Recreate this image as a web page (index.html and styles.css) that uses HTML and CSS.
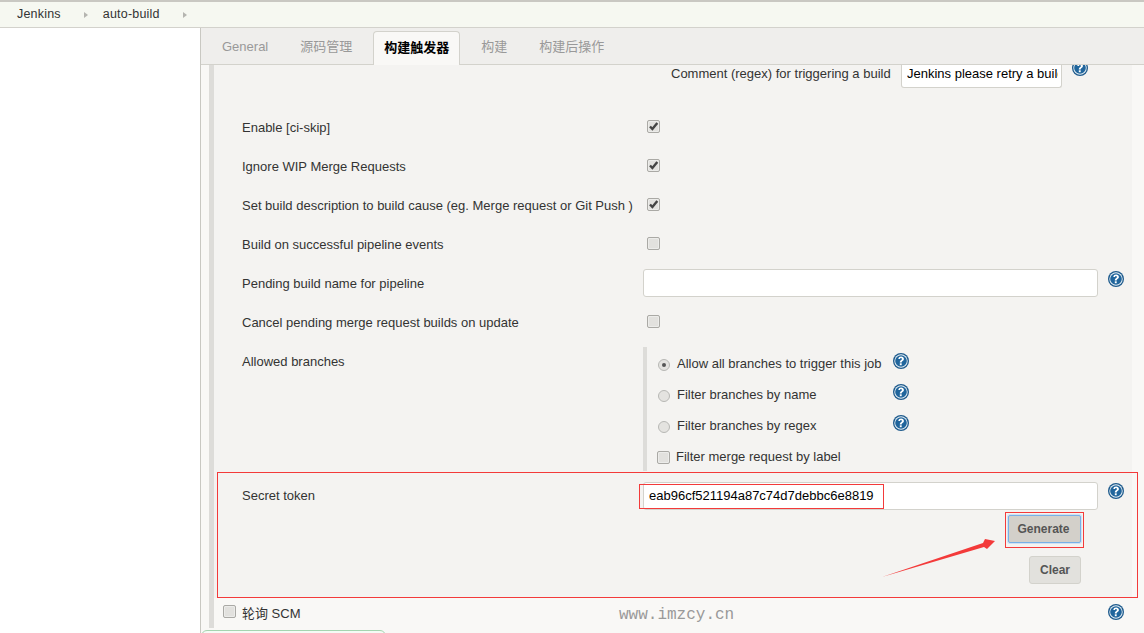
FILE: index.html
```html
<!DOCTYPE html>
<html lang="zh">
<head>
<meta charset="utf-8">
<title>auto-build Config</title>
<link rel="stylesheet" href="styles.css">
</head>
<body>
<svg class="defs" width="0" height="0" aria-hidden="true">
  <symbol id="help" viewBox="0 0 16 16">
    <circle cx="8" cy="8" r="8" fill="#1d5a8c"/>
    <circle cx="8" cy="8" r="6.7" fill="#e9f0f5"/>
    <circle cx="8" cy="8" r="5.8" fill="#20659c"/>
    <path d="M5.300 6.100C5.400 4.300 6.600 3.500 8.100 3.500c1.700 0 2.800 1 2.800 2.400 0 1.100-.7 1.700-1.400 2.200-.6.400-.8.800-.8 1.400H6.800c0-1.100.3-1.700 1.100-2.300.6-.5 1-.8 1-1.300 0-.5-.4-.8-.9-.8-.6 0-1 .4-1.100 1z" fill="#fff"/>
    <rect x="6.800" y="10.300" width="1.900" height="1.900" fill="#fff"/>
  </symbol>
  <symbol id="tick" viewBox="0 0 11 11">
    <path d="M2 5.500l2.400 2.500L9.300 2" fill="none" stroke="#444" stroke-width="2.400"/>
  </symbol>
</svg>

<header class="crumbs">
  <a class="crumb">Jenkins</a><span class="caret"></span>
  <a class="crumb">auto-build</a><span class="caret"></span>
</header>

<div class="layout">
  <aside class="side"></aside>
  <main class="main">
    <nav class="tabs">
      <span class="tab">General</span>
      <span class="tab">源码管理</span>
      <span class="tab tab-on">构建触发器</span>
      <span class="tab">构建</span>
      <span class="tab">构建后操作</span>
    </nav>

    <div class="section">
      <div class="panel">
        <div class="row-comment">
          <span class="comment-label">Comment (regex) for triggering a build</span>
          <input class="field field-comment" value="Jenkins please retry a build" readonly>
          <svg class="help help-comment"><use href="#help"/></svg>
        </div>

        <div class="row"><span class="label">Enable [ci-skip]</span><span class="box"><svg class="tick"><use href="#tick"/></svg></span></div>
        <div class="row"><span class="label">Ignore WIP Merge Requests</span><span class="box"><svg class="tick"><use href="#tick"/></svg></span></div>
        <div class="row"><span class="label">Set build description to build cause (eg. Merge request or Git Push )</span><span class="box"><svg class="tick"><use href="#tick"/></svg></span></div>
        <div class="row"><span class="label">Build on successful pipeline events</span><span class="box"></span></div>
        <div class="row"><span class="label">Pending build name for pipeline</span><input class="field field-wide field-lift" readonly><svg class="help help-row"><use href="#help"/></svg></div>
        <div class="row"><span class="label">Cancel pending merge request builds on update</span><span class="box"></span></div>

        <div class="row-branches">
          <span class="label label-top">Allowed branches</span>
          <div class="branches">
            <div class="opt"><span class="radio radio-on"></span><span class="opt-text">Allow all branches to trigger this job</span><svg class="help"><use href="#help"/></svg></div>
            <div class="opt"><span class="radio"></span><span class="opt-text">Filter branches by name</span><svg class="help"><use href="#help"/></svg></div>
            <div class="opt"><span class="radio"></span><span class="opt-text">Filter branches by regex</span><svg class="help"><use href="#help"/></svg></div>
            <div class="opt-check"><span class="box"></span><span>Filter merge request by label</span></div>
          </div>
        </div>

        <div class="row-token">
          <div class="token-main">
            <span class="label">Secret token</span>
            <input class="field field-wide" value="eab96cf521194a87c74d7debbc6e8819" readonly>
            <svg class="help help-token"><use href="#help"/></svg>
          </div>
          <div class="token-actions">
            <button class="btn btn-focus" type="button">Generate</button>
            <button class="btn" type="button">Clear</button>
          </div>
        </div>
      </div>

      <div class="poll">
        <span class="box"></span>
        <span class="poll-label">轮询 SCM</span>
        <svg class="help help-poll"><use href="#help"/></svg>
      </div>
    </div>

    <div class="notice"></div>
  </main>
</div>

<div class="mark mark-section"></div>
<div class="mark mark-token"></div>
<div class="mark mark-btn"></div>
<svg class="arrow" width="130" height="50" viewBox="0 0 130 50">
  <path d="M2 42L103 8 105 4 115 6 107 14 104 12z" fill="#f33a3a"/>
</svg>
<div class="watermark">www.imzcy.cn</div>
</body>
</html>
```
FILE: styles.css
```css
* { box-sizing: border-box; }
html, body { height: 100%; }
body {
  margin: 0;
  height: 633px;
  overflow: hidden;
  background: #fff;
  color: #333;
  font: 13px/1.3 "Liberation Sans", "Noto Sans CJK SC", sans-serif;
  position: relative;
}
.defs { position: absolute; }

.crumbs {
  height: 28px;
  display: flex;
  align-items: center;
  padding: 0 0 0 17px;
  background: #f6f8f1;
  border-top: 2px solid #c9c8c2;
  border-bottom: 1px solid #d3d2cc;
  font-size: 12.5px;
  color: #333;
  letter-spacing: .2px;
}
.caret {
  width: 0;
  height: 0;
  margin: 0 15px 0 23px;
  border-left: 4px solid #b5b5b0;
  border-top: 3.5px solid transparent;
  border-bottom: 3.5px solid transparent;
}

.layout { display: flex; height: 605px; }
.side { width: 200px; background: #fff; }
.main {
  flex: 1;
  min-width: 0;
  border-left: 1px solid #c9c8c2;
  background: #f9f8f6;
  position: relative;
  overflow: hidden;
}

.tabs {
  height: 37px;
  display: flex;
  align-items: flex-end;
  gap: 10px;
  padding-left: 10px;
  background: #efeeec;
  border-bottom: 1px solid #d3d2cc;
}
.tab {
  height: 33px;
  padding: 0 11px;
  display: flex;
  align-items: center;
  color: #999;
  font-size: 13px;
}
.tab-on {
  height: 34px;
  margin-bottom: -1px;
  background: #f9f8f6;
  border: 1px solid #d3d2cc;
  border-bottom: 0;
  border-radius: 4px 4px 0 0;
  color: #000;
  font-weight: 700;
  padding: 0 10px;
}

.section {
  margin-left: 8px;
  border-left: 5px solid #dddcd9;
  height: 563px;
}
.panel {
  width: 918px;
  background: #f4f3f1;
  height: 533px;
  padding-left: 28px;
  overflow: hidden;
}

.row-comment {
  height: 44px;
  display: flex;
  align-items: flex-start;
  padding-left: 429px;
}
.comment-label { width: 230px; line-height: 18px; }
.field {
  height: 28px;
  padding: 0 6px 2px 5px;
  background: #fff;
  border: 1px solid #d3d2cc;
  border-radius: 3px;
  color: #000;
  font: 13px "Liberation Sans", sans-serif;
  outline: 0;
}
.field-comment {
  width: 161px;
  height: 23px;
  padding: 0 3px 5px 5px;
  border-top: 0;
  border-radius: 0 0 3px 3px;
}
.field-lift { margin-top: -4px; }
.help { width: 16px; height: 16px; flex: none; }
.help-comment { margin: -5px 0 0 10px; }
.help-row { margin: -12px 0 0 10px; }
.help-token { margin: -10px 0 0 10px; }

.row {
  height: 39px;
  display: flex;
  align-items: center;
}
.label { width: 401px; flex: none; }
.label-top { padding-top: 7px; }
.box {
  width: 13px;
  height: 13px;
  flex: none;
  margin: -4px 0 0 4px;
  background: #e2e1de;
  border: 1px solid #aaa9a5;
  border-radius: 2px;
  box-shadow: inset 0 0 0 1px #ececea;
  display: block;
}
.tick { display: block; width: 11px; height: 11px; }
.field-wide { width: 455px; flex: none; }

.row-branches {
  display: flex;
  height: 125px;
  margin-top: 4px;
}
.branches {
  width: 270px;
  height: 124px;
  border-left: 4px solid #dddcd9;
  padding: 1px 0 0 11px;
}
.opt {
  height: 31px;
  display: flex;
  align-items: center;
  position: relative;
}
.opt .help { margin: -5px 0 0 0; position: absolute; left: 235px; }
.radio {
  width: 12px;
  height: 12px;
  flex: none;
  margin: 2px 7px 0 0;
  border-radius: 50%;
  background: #e4e3e0;
  border: 1px solid #b8b8b5;
  display: flex;
  align-items: center;
  justify-content: center;
}
.radio-on::before {
  content: "";
  width: 4px;
  height: 4px;
  border-radius: 50%;
  background: #555;
}
.opt-text { white-space: nowrap; margin-top: 2px; }
.opt-check {
  display: flex;
  align-items: center;
  height: 26px;
  margin-top: 3px;
  white-space: nowrap;
}
.opt-check .box { margin: 0 6px 0 -1px; }

.row-token { height: 125px; padding-top: 10px; }
.token-main { display: flex; align-items: center; height: 28px; }
.token-actions {
  width: 839px;
  display: flex;
  flex-direction: column;
  align-items: flex-end;
  gap: 13px;
  margin-top: 5px;
}
.btn {
  height: 28px;
  padding: 0 10px;
  background: #e2e1dd;
  border: 1px solid #d3d2cc;
  border-radius: 3px;
  color: #555;
  font: 700 12px "Liberation Sans", sans-serif;
}
.btn-focus {
  width: 73px;
  padding: 0 2px 0 0;
  background: #d3d0ca;
  border: 1px solid #78b0e6;
  box-shadow: 0 0 0 1px #cfe1f3;
  border-radius: 2px;
}

.poll {
  height: 30px;
  display: flex;
  align-items: center;
  padding-left: 9px;
  width: 918px;
}
.poll .box { margin: -4px 0 0 0; }
.poll-label { margin: 2px 0 0 6px; width: 867px; flex: none; }
.help-poll { margin: -2px 0 0 -1px; }

.notice {
  position: absolute;
  left: 0;
  top: 602px;
  width: 185px;
  height: 12px;
  background: #f4fbf5;
  border: 1px solid #a5d4b0;
  border-radius: 6px 6px 0 0;
}

.mark { position: absolute; border: 1px solid #f33a3a; pointer-events: none; }
.mark-section { left: 217px; top: 472px; width: 921px; height: 126px; }
.mark-token { left: 639px; top: 484px; width: 245px; height: 25px; }
.mark-btn { left: 1005px; top: 512px; width: 79px; height: 36px; }
.arrow { position: absolute; left: 880px; top: 535px; }
.watermark {
  position: absolute;
  left: 619px;
  top: 605px;
  font: 16px/20px "Liberation Mono", monospace;
  color: #999;
}
```
